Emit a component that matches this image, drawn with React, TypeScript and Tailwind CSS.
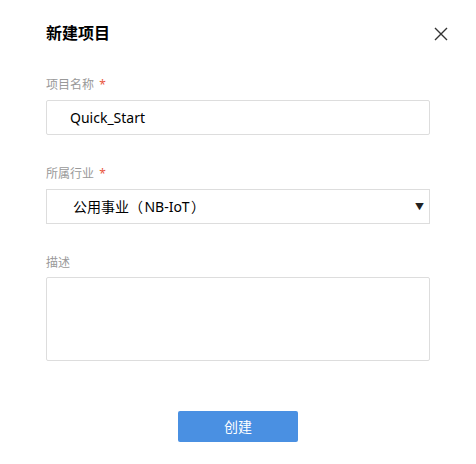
import React from 'react';

const font = { fontFamily: '"Noto Sans", "Noto Sans CJK SC", sans-serif' };

const App: React.FC = () => {
  return (
    <div className="w-[476px] h-[464px] bg-white relative" style={font}>
      <div className="px-[46px] pt-[21px]">
        {/* Header */}
        <div className="flex items-center justify-between h-[24px]">
          <h2 className="text-[16px] font-bold text-black leading-[24px]">新建项目</h2>
        </div>

        {/* Project name */}
        <div className="mt-[32px] text-[12px] text-[#999] leading-[16px]">
          项目名称 <span className="text-[#e9573f] ml-[2px]">*</span>
        </div>
        <div className="mt-[7px] h-[35px] border border-[#ddd] rounded-[2px] flex items-center pl-[23px] text-[14px] text-black">
          Quick_Start
        </div>

        {/* Industry */}
        <div className="mt-[31px] text-[12px] text-[#999] leading-[16px]">
          所属行业 <span className="text-[#e9573f] ml-[2px]">*</span>
        </div>
        <div className="mt-[7px] h-[35px] border border-[#ddd] flex items-center justify-between pl-[26px] pr-[5px] text-[14px] text-black">
          <span>公用事业（&#8202;NB-IoT&#8202;）</span>
          <span className="text-[9px] text-[#222]">▼</span>
        </div>

        {/* Description */}
        <div className="mt-[31px] text-[12px] text-[#999] leading-[16px]">描述</div>
        <div className="mt-[6px] h-[84px] border border-[#ddd] rounded-[2px]" />

        {/* Submit */}
        <div className="mt-[50px] flex justify-center">
          <button className="w-[120px] h-[31px] bg-[#4a90e2] rounded-[2px] text-white text-[14px]">
            创建
          </button>
        </div>
      </div>

      {/* Close */}
      <button className="absolute left-[434px] top-[27px] w-[14px] h-[14px] text-[#333]">
        <svg viewBox="0 0 14 14" width="14" height="14" fill="none" stroke="currentColor" strokeWidth="1.4">
          <path d="M1 1 L13 13 M13 1 L1 13" />
        </svg>
      </button>
    </div>
  );
};

export default App;
